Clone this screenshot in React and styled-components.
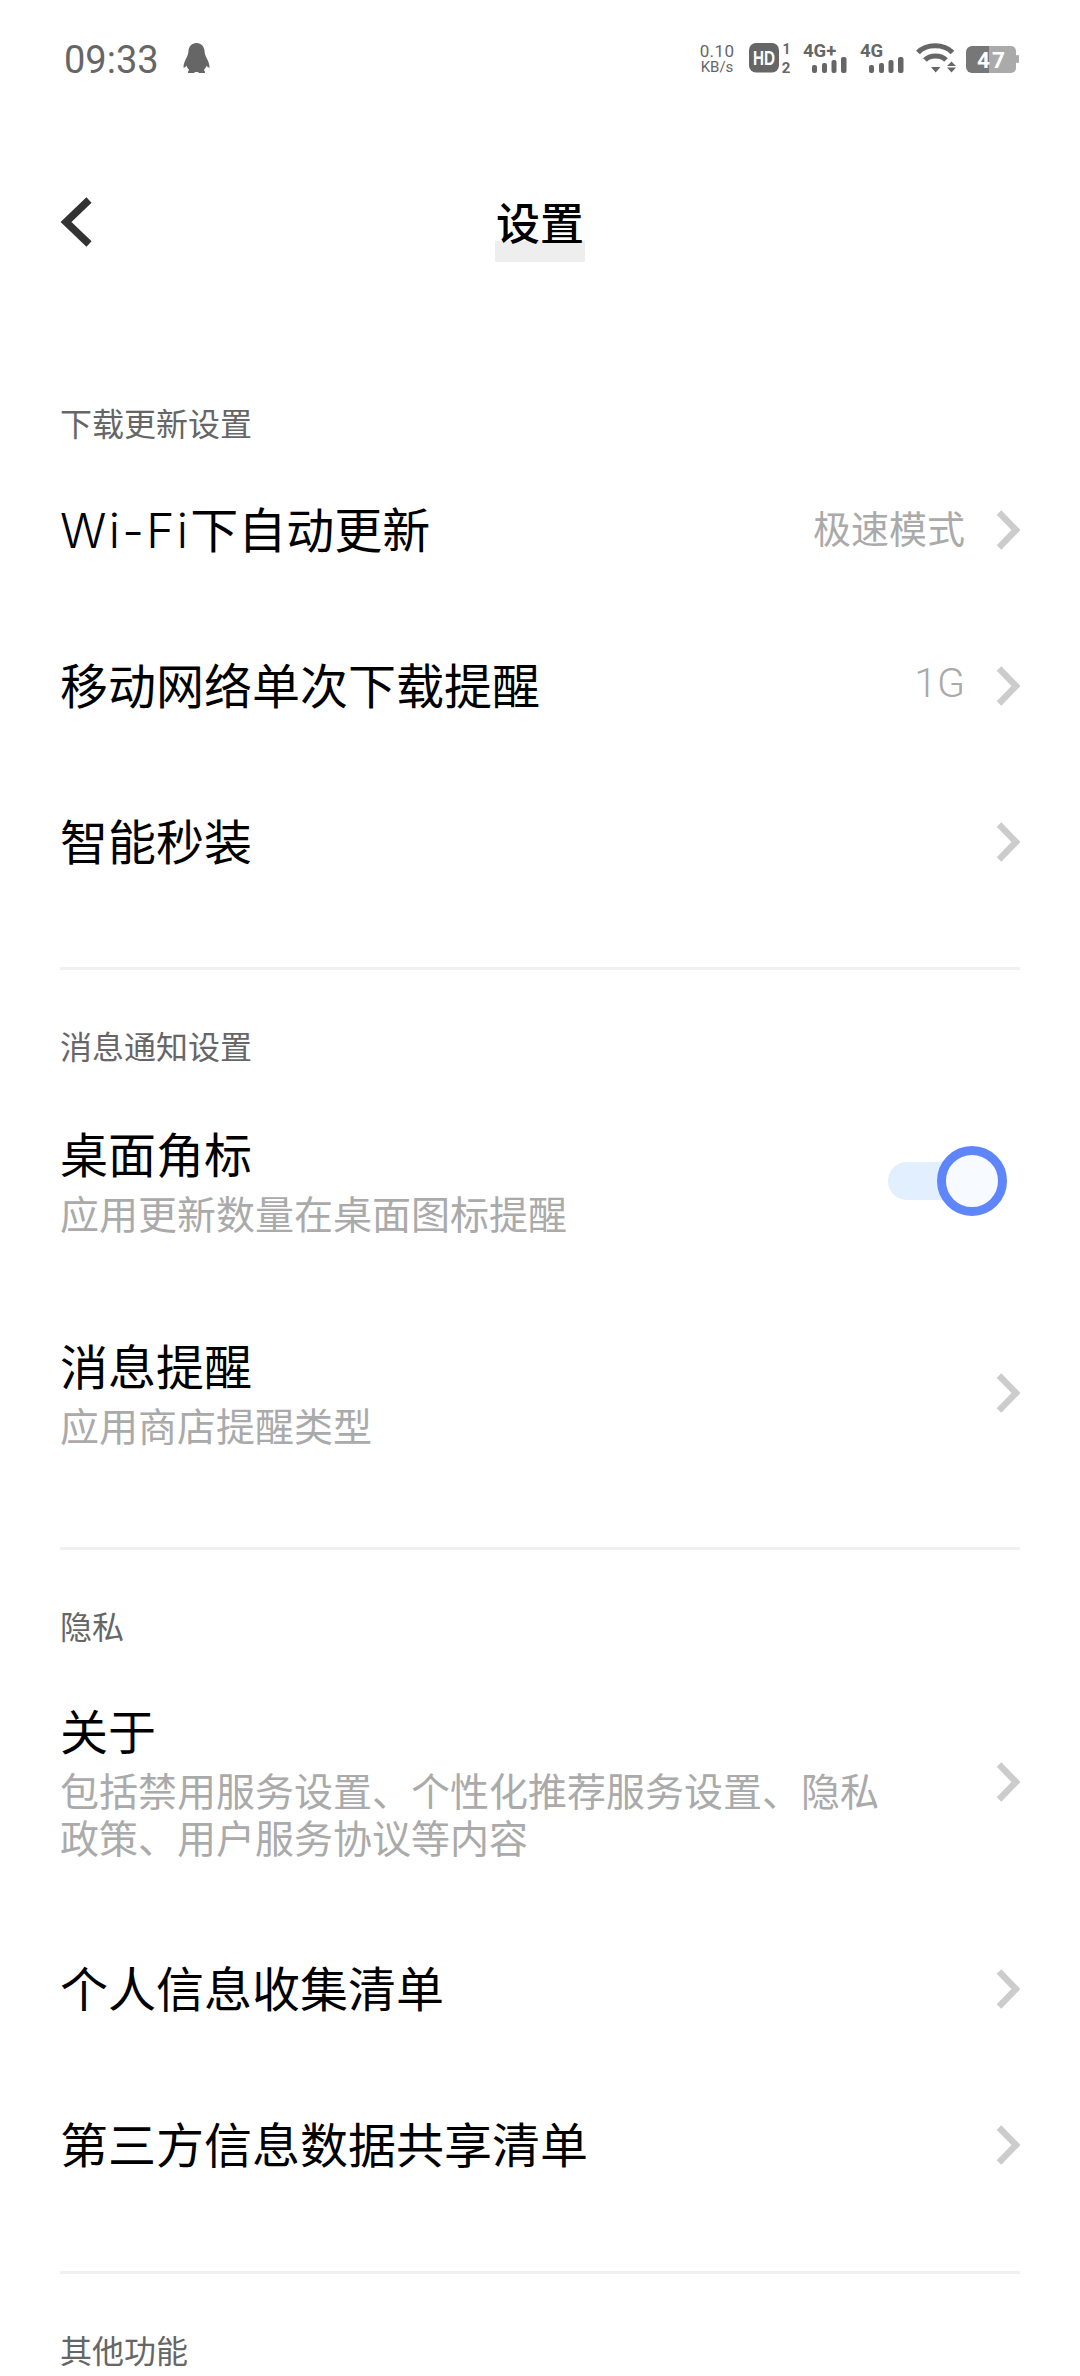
import React from 'react'
import styled, { createGlobalStyle } from 'styled-components'

const cjk = `"Noto Sans CJK SC", "Noto Sans", sans-serif`

const GlobalStyle = createGlobalStyle`
  html, body { margin: 0; padding: 0; background: #fff; }
  body { font-family: ${cjk}; }
  #root { height: 2376px; overflow: hidden; }
`

const Page = styled.div`
  width: 1080px;
  height: 2376px;
  overflow: hidden;
  background: #fff;
`

const StatusBar = styled.div`
  height: 120px;
  display: flex;
  align-items: flex-start;
  justify-content: space-between;
  padding: 40px 60px 0 64px;
  box-sizing: border-box;
`

const StatusLeft = styled.div`
  display: flex;
  align-items: center;
  gap: 24px;
  height: 36px;
`

const Time = styled.span`
  font: 400 38px/36px Roboto, sans-serif;
  color: #666;
  margin-top: 3px;
`

const StatusRight = styled.div`
  display: flex;
  align-items: flex-start;
`

const NetSpeed = styled.div`
  width: 36px;
  margin-right: 14px;
  margin-top: 2px;
  display: flex;
  flex-direction: column;
  align-items: center;
  font-family: Roboto, sans-serif;
  color: #666;
  span { display: block; white-space: nowrap; }
  span:first-child { font-size: 17px; line-height: 18px; letter-spacing: 0.4px; }
  span:last-child { font-size: 15px; line-height: 14px; }
`

const Icon = styled.svg`
  display: block;
  flex: none;
  overflow: visible;
  margin-right: ${p => p.$gap || 0}px;
`

const Header = styled.header`
  height: 208px;
  padding: 0 60px;
  display: flex;
  align-items: center;
  justify-content: center;
  position: relative;
`

const BackIcon = styled.svg`
  position: absolute;
  left: 59px;
  top: 76px;
`

const Title = styled.h1`
  margin: 0 0 6px;
  position: relative;
  isolation: isolate;
  font-size: 44px;
  font-weight: 500;
  line-height: 64px;
  color: #000;
  &::before {
    content: '';
    position: absolute;
    left: -1px;
    right: -1px;
    top: 52px;
    height: 21px;
    background: #eee;
    z-index: -1;
  }
`

const Section = styled.section`
  margin: 0 60px;
  padding-top: ${p => p.$top}px;
  padding-bottom: ${p => p.$bottom || 0}px;
  border-bottom: ${p => (p.$last ? 'none' : '3px solid #f0f0f0')};
`

const SectionLabel = styled.div`
  height: 54px;
  line-height: 48px;
  font-size: 32px;
  color: #666;
`

const Row = styled.div`
  height: ${p => p.$h || 156}px;
  margin-bottom: ${p => p.$after || 0}px;
  display: flex;
  align-items: center;
  justify-content: space-between;
`

const RowText = styled.div`
  flex: 1;
  min-width: 0;
`

const RowTitle = styled.div`
  height: 66px;
  font-size: 48px;
  line-height: ${p => (p.$withSub ? 54 : 60)}px;
  color: #000;
  white-space: nowrap;
`

const Latin = styled.span`
  font-family: Inter, sans-serif;
  font-weight: 300;
  letter-spacing: 2.3px;
`

const RowSub = styled.div`
  height: 45px;
  font-size: 39px;
  line-height: 39px;
  color: #aaa;
  margin-top: 2px;
  white-space: nowrap;
`

const RowRight = styled.div`
  display: flex;
  align-items: center;
  gap: 31px;
`

const Value = styled.span`
  display: block;
  height: 50px;
  font-family: ${p => (p.$latin ? 'Roboto, sans-serif' : 'inherit')};
  font-weight: ${p => (p.$latin ? 300 : 400)};
  font-size: ${p => (p.$latin ? 41 : 38)}px;
  line-height: 44px;
  color: #aaa;
  white-space: nowrap;
`

const Switch = styled.div`
  position: relative;
  width: 99px;
  height: 38px;
  margin-right: 33px;
  border-radius: 19px;
  background: #e2effe;
`

const Knob = styled.div`
  position: absolute;
  right: -20px;
  top: -16px;
  width: 70px;
  height: 70px;
  box-sizing: border-box;
  border: 9px solid #5f85fb;
  border-radius: 50%;
  background: #f7fbff;
`

const Chevron = () => (
  <svg width="24" height="40" viewBox="0 0 24 40">
    <path d="M3 2.5 L20 20 L3 37.5" fill="none" stroke="#ccc" strokeWidth="6.5" />
  </svg>
)

const Penguin = () => (
  <svg width="27" height="31" viewBox="0 0 27 31">
    <path
      fill="#666"
      d="M13.5 0C8.5 0 5.6 3.8 5.4 8.6 5.2 11 4.6 12.6 3.4 15 1.8 18 .6 21 .4 24.6c1 .3 2-.5 3-1.9.7 1.5 1.5 2.9 2.7 4.2-.6.5-1 1.2-1.2 3.1h6.2l.8-1.1c1 .2 2.2.2 3.2 0l.8 1.1h6.2c-.2-1.9-.6-2.6-1.2-3.1 1.2-1.3 2-2.7 2.7-4.2 1 1.4 2 2.2 3 1.9-.2-3.6-1.4-6.6-3-9.6-1.2-2.4-1.8-4-2-6.4C21.4 3.8 18.5 0 13.5 0z"
    />
  </svg>
)

const HdIcon = () => (
  <Icon $gap={11} width="43" height="34" viewBox="0 0 43 34">
    <rect x="0" y="3" width="30" height="29.5" rx="7" fill="#666" />
    <text x="4" y="24.5" textLength="22" lengthAdjust="spacingAndGlyphs" fontFamily="Liberation Sans" fontWeight="700" fontSize="19.5" fill="#fff">HD</text>
    <text x="37.5" y="13.5" textAnchor="middle" fontFamily="Roboto" fontWeight="700" fontSize="14" fill="#666">1</text>
    <text x="37" y="32.5" textAnchor="middle" fontFamily="Roboto" fontWeight="700" fontSize="15" fill="#666">2</text>
  </Icon>
)

const SignalIcon = ({ label, gap }) => (
  <Icon $gap={gap} width="44" height="34" viewBox="0 0 44 34">
    <text x="0" y="17" fontFamily="Roboto" fontWeight="700" fontSize="18.5" fill="#666">{label}</text>
    <rect x="9" y="25" width="5" height="8" rx="2" fill="#666" />
    <rect x="19" y="23" width="5" height="10" rx="2" fill="#666" />
    <rect x="28.5" y="20" width="5" height="13" rx="2" fill="#666" />
    <rect x="38" y="17" width="5.5" height="16" rx="2" fill="#666" />
  </Icon>
)

const WifiIcon = () => (
  <Icon $gap={8} width="41" height="34" viewBox="0 0 41 34">
    <path d="M2 12.5 C10 3.5 28 3.5 36.5 12.5" fill="none" stroke="#666" strokeWidth="5" />
    <path d="M9 20 C14 14.5 25 14.5 30 20" fill="none" stroke="#666" strokeWidth="5" />
    <path d="M15 27 H24.5 L19.7 32.5z" fill="#666" />
    <path d="M31 26 H40 L35.5 21.5z M31 27.5 H40 L35.5 32.5z" fill="#666" />
  </Icon>
)

const BatteryIcon = () => (
  <Icon width="55" height="34" viewBox="0 0 55 34">
    <path d="M7 6 H24 V33 H7 a6 6 0 0 1 -6 -6 V12 a6 6 0 0 1 6 -6z" fill="#777" />
    <path d="M24 6 H46 a5 5 0 0 1 5 5 V28 a5 5 0 0 1 -5 5 H24z" fill="#aaa" />
    <rect x="51" y="15" width="3" height="8" rx="1" fill="#aaa" />
    <text x="27" y="27.5" textAnchor="middle" fontFamily="Roboto" fontWeight="700" fontSize="22.5" letterSpacing="2" fill="#fff">47</text>
  </Icon>
)

const BackArrow = () => (
  <BackIcon width="34" height="52" viewBox="0 0 34 52">
    <path d="M30 4 L7 26 L30 48" fill="none" stroke="#333" strokeWidth="7.5" />
  </BackIcon>
)

const SettingRow = ({ title, sub, value, latinValue, h, after }) => (
  <Row $h={h} $after={after}>
    <RowText>
      <RowTitle $withSub={!!sub}>{title}</RowTitle>
      {sub && sub.map(line => <RowSub key={line}>{line}</RowSub>)}
    </RowText>
    <RowRight>
      {value && <Value $latin={latinValue}>{value}</Value>}
      <Chevron />
    </RowRight>
  </Row>
)

export default function App() {
  return (
    <Page>
      <GlobalStyle />
      <StatusBar>
        <StatusLeft>
          <Time>09:33</Time>
          <Penguin />
        </StatusLeft>
        <StatusRight>
          <NetSpeed>
            <span>0.10</span>
            <span>KB/s</span>
          </NetSpeed>
          <HdIcon />
          <SignalIcon label="4G+" gap={13} />
          <SignalIcon label="4G" gap={12} />
          <WifiIcon />
          <BatteryIcon />
        </StatusRight>
      </StatusBar>
      <Header>
        <BackArrow />
        <Title>设置</Title>
      </Header>

      <Section $top={70} $bottom={47}>
        <SectionLabel>下载更新设置</SectionLabel>
        <SettingRow title={<><Latin>Wi-Fi</Latin>下自动更新</>} value="极速模式" />
        <SettingRow title="移动网络单次下载提醒" value="1G" latinValue />
        <SettingRow title="智能秒装" />
      </Section>

      <Section $top={51} $bottom={48}>
        <SectionLabel>消息通知设置</SectionLabel>
        <Row $h={212}>
          <RowText>
            <RowTitle $withSub>桌面角标</RowTitle>
            <RowSub>应用更新数量在桌面图标提醒</RowSub>
          </RowText>
          <Switch>
            <Knob />
          </Switch>
        </Row>
        <SettingRow title="消息提醒" sub={['应用商店提醒类型']} h={212} />
      </Section>

      <Section $top={51} $bottom={48}>
        <SectionLabel>隐私</SectionLabel>
        <SettingRow
          title="关于"
          sub={['包括禁用服务设置、个性化推荐服务设置、隐私', '政策、用户服务协议等内容']}
          h={254}
          after={2}
        />
        <SettingRow title="个人信息收集清单" />
        <SettingRow title="第三方信息数据共享清单" />
      </Section>

      <Section $top={51} $last>
        <SectionLabel>其他功能</SectionLabel>
      </Section>
    </Page>
  )
}
